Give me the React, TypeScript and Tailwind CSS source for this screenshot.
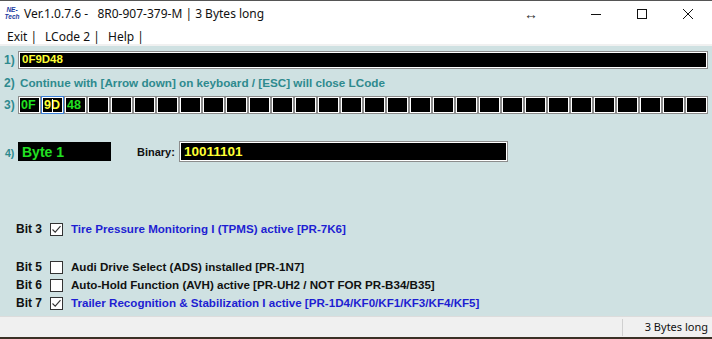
import React from "react";

const arial = { fontFamily: '"Liberation Sans", Arial, sans-serif' };
const ui = { fontFamily: '"Noto Sans", "Open Sans", sans-serif' };

const cells = ["0F", "9D", "48", ...Array(27).fill("")];

function Cell({ value, index }: { value: string; index: number }) {
  const focused = index === 1;
  return (
    <div
      className={
        focused
          ? "flex h-[18px] w-[23px] bg-[#3c7fd6] p-px"
          : "flex h-[18px] w-[23px] bg-[#8c8c8c] p-px"
      }
    >
      <div className="relative flex flex-1 items-center border border-white bg-black pl-[1px]">
        <span
          className={
            focused
              ? "text-[12.5px] font-bold leading-none text-[#ffff33]"
              : "text-[12.5px] font-bold leading-none text-[#22e022]"
          }
        >
          {value}
        </span>
        {focused ? (
          <span className="absolute left-[9px] top-[1px] h-[13px] w-px bg-white" />
        ) : null}
      </div>
    </div>
  );
}

function Check({ checked }: { checked: boolean }) {
  return (
    <span className="flex h-[13px] w-[13px] items-center justify-center border border-[#333] bg-white">
      {checked ? (
        <svg width="11" height="11" viewBox="0 0 11 11">
          <path d="M1.5 5.5 L4.2 8.2 L9.5 2.2" fill="none" stroke="#333" strokeWidth="1.1" />
        </svg>
      ) : null}
    </span>
  );
}

function BitRow({
  bit,
  checked,
  text,
  className,
}: {
  bit: number;
  checked: boolean;
  text: string;
  className?: string;
}) {
  return (
    <div className={"flex h-[18px] items-center pl-[16px] " + (className ?? "")}>
      <span className="w-[34px] text-[12px] font-bold text-[#111]">Bit {bit}</span>
      <Check checked={checked} />
      <span
        className={
          checked
            ? "ml-[8px] text-[11.6px] font-bold text-[#1e1ed2]"
            : "ml-[8px] text-[11.6px] font-bold text-[#111]"
        }
      >
        {text}
      </span>
    </div>
  );
}

export default function App() {
  return (
    <div className="flex h-[339px] w-[712px] flex-col overflow-hidden bg-white">
      {/* title bar */}
      <div className="flex h-[26px] shrink-0 items-center border-t border-[#555] bg-white" style={ui}>
        <div className="ml-[3px] flex w-[18px] flex-col items-center leading-none text-[#1b3aa0]" style={arial}>
          <span className="text-[6.5px] font-bold italic">NE-</span>
          <span className="text-[6.5px] font-bold italic">Tech</span>
        </div>
        <span className="ml-[3px] whitespace-pre text-[12px] text-[#111]">
          Ver.1.0.7.6 -   8R0-907-379-M | 3 Bytes long
        </span>
        <span className="ml-auto mr-[52px] text-[14px] font-bold leading-none text-[#333]">↔</span>
        <svg width="12" height="12" viewBox="0 0 12 12" className="mr-[34px]">
          <path d="M1 6.5 H11" stroke="#111" strokeWidth="1" />
        </svg>
        <svg width="12" height="12" viewBox="0 0 12 12" className="mr-[34px]">
          <rect x="1.5" y="1.5" width="9" height="9" fill="none" stroke="#111" strokeWidth="1" />
        </svg>
        <svg width="12" height="12" viewBox="0 0 12 12" className="mr-[18px]">
          <path d="M1 1 L11 11 M11 1 L1 11" stroke="#111" strokeWidth="1" />
        </svg>
      </div>

      {/* menu bar */}
      <div className="flex h-[18px] shrink-0 items-center bg-white pt-[3px] text-[12px] text-[#111]" style={ui}>
        <span className="ml-[7px] w-[38px]">Exit |</span>
        <span className="w-[63px]">LCode 2 |</span>
        <span>Help |</span>
      </div>
      <div className="h-[2px] shrink-0 bg-[#f0f0f0]" />

      {/* content */}
      <div className="flex flex-1 flex-col bg-[#cfe1e2]" style={arial}>
        <div className="mt-[5px] flex items-center">
          <span className="w-[18px] pl-[4px] text-[12px] font-bold text-[#2e8a8e]">1)</span>
          <div className="flex h-[18px] w-[690px] bg-[#8c8c8c] p-px">
            <div className="flex flex-1 items-center border border-white bg-black pl-[2px]">
              <span className="text-[11.5px] font-bold leading-none text-[#ffff33]">0F9D48</span>
            </div>
          </div>
        </div>

        <div className="mt-[7px] flex h-[14px] items-center font-bold text-[#2e8a8e]">
          <span className="w-[18px] pl-[4px] text-[12px]">2)</span>
          <span className="ml-[2px] text-[11.7px]">
            Continue with [Arrow down] on keyboard / [ESC] will close LCode
          </span>
        </div>

        <div className="mt-[6px] flex items-center">
          <span className="w-[18px] pl-[4px] text-[12px] font-bold text-[#2e8a8e]">3)</span>
          {cells.map((c, i) => (
            <Cell key={i} value={c} index={i} />
          ))}
        </div>

        <div className="mt-[27px] flex h-[21px] items-center">
          <span className="w-[18px] pl-[5px] pt-[4px] text-[10.5px] font-bold text-[#2e8a8e]">4)</span>
          <div className="flex h-[19px] w-[93px] items-center bg-black pl-[4px]">
            <span className="text-[14px] font-bold leading-none text-[#22e022]">Byte 1</span>
          </div>
          <span className="ml-[26px] w-[42px] pt-[2px] text-[11px] font-bold text-[#111]">Binary:</span>
          <div className="flex h-[21px] w-[329px] bg-[#8c8c8c] p-px">
            <div className="flex flex-1 items-center border border-white bg-black pl-[3px]">
              <span className="text-[13.5px] font-bold leading-none text-[#ffff33]">10011101</span>
            </div>
          </div>
        </div>

        <BitRow
          className="mt-[58px]"
          bit={3}
          checked
          text="Tire Pressure Monitoring I (TPMS) active [PR-7K6]"
        />
        <BitRow
          className="mt-[20px]"
          bit={5}
          checked={false}
          text="Audi Drive Select (ADS) installed [PR-1N7]"
        />
        <BitRow
          bit={6}
          checked={false}
          text="Auto-Hold Function (AVH) active [PR-UH2 / NOT FOR PR-B34/B35]"
        />
        <BitRow
          bit={7}
          checked
          text="Trailer Recognition & Stabilization I active [PR-1D4/KF0/KF1/KF3/KF4/KF5]"
        />
      </div>

      {/* status bar */}
      <div className="flex h-[21px] shrink-0 items-center border-t border-[#dcdcdc] bg-[#f0f0f0]" style={ui}>
        <div className="ml-auto flex h-[17px] w-[90px] items-center justify-end border-l border-[#d0d0d0] pr-[4px]">
          <span className="text-[11px] text-[#111]">3 Bytes long</span>
        </div>
      </div>
      <div className="h-[2px] shrink-0 bg-[#3a3026]" />
    </div>
  );
}
